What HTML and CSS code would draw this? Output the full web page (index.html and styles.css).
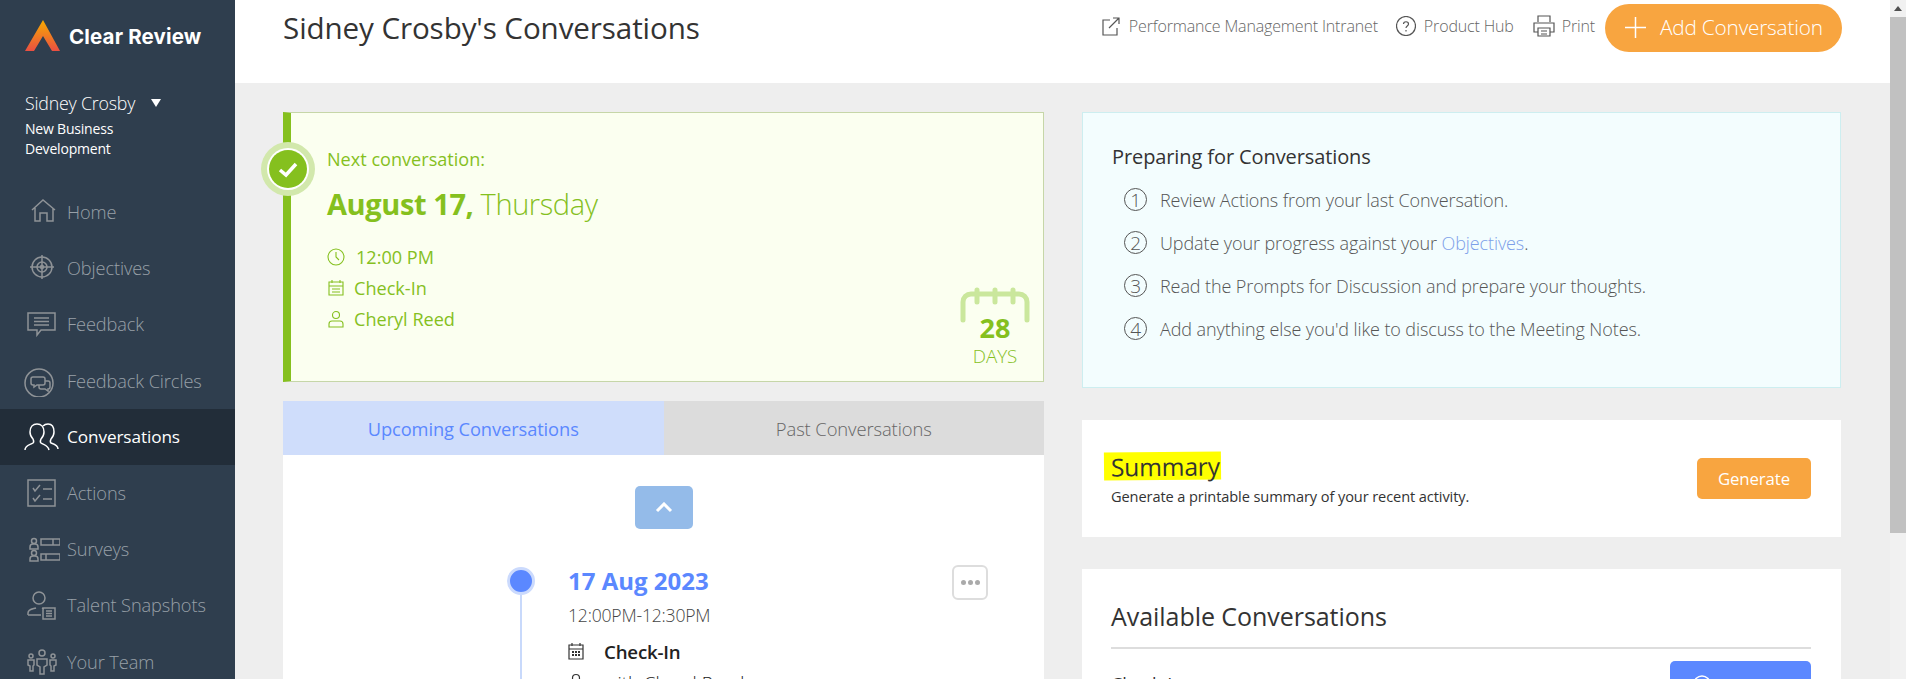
FILE: index.html
```html
<!DOCTYPE html>
<html lang="en">
<head>
<meta charset="utf-8">
<title>Sidney Crosby's Conversations</title>
<link rel="stylesheet" href="styles.css">
</head>
<body>
<div class="app">
  <aside class="sidebar">
    <div class="brand">
      <svg class="brand-mark" width="36" height="32" viewBox="0 0 36 32"><defs><linearGradient id="lg" x1="0" y1="0" x2="0" y2="1"><stop offset="0" stop-color="#f7ab00"/><stop offset="1" stop-color="#ea4f42"/></linearGradient></defs><polygon points="18,0 35,31 27,31 18,16 9,31 0,31" fill="url(#lg)"/></svg>
      <span class="brand-name">Clear Review</span>
    </div>
    <div class="user">
      <div class="user-name">Sidney Crosby <span class="caret"></span></div>
      <div class="user-team">New Business<br>Development</div>
    </div>
    <nav class="nav">
      <a class="nav-item"><svg class="nav-icon" viewBox="0 0 36 32"><path d="M8 14 19 4l12 10M11 12v13h5v-8h7v8h6V12"/></svg>Home</a>
      <a class="nav-item"><svg class="nav-icon" viewBox="0 0 36 32"><circle cx="18" cy="15" r="10"/><circle cx="18" cy="15" r="5"/><circle cx="18" cy="15" r="1.5"/><path d="M18 3v24M6 15h24"/></svg>Objectives</a>
      <a class="nav-item"><svg class="nav-icon" viewBox="0 0 36 32"><path d="M4 5h27v17H17l-4 5v-5H4zM10 10h15M10 13.500h15M10 17h15"/></svg>Feedback</a>
      <a class="nav-item"><svg class="nav-icon" viewBox="0 0 36 32"><circle cx="15" cy="18" r="14"/><path d="M9 12h10a2 2 0 0 1 2 2v4a2 2 0 0 1-2 2h-6l-3 2v-2H9a2 2 0 0 1-2-2v-4a2 2 0 0 1 2-2z"/><path d="M21 16h3a2 2 0 0 1 2 2v4a2 2 0 0 1-2 2v2l-3-2h-4a2 2 0 0 1-2-2v-2"/></svg>Feedback Circles</a>
      <a class="nav-item nav-item-active"><svg class="nav-icon" viewBox="0 0 36 32"><path d="M1 29c0-5 5-5 8-7 1-1 1-2 0-4-2-2-3-4-3-7 0-5 3-8 7-8s7 3 7 8c0 3-1 5-3 7-1 2-1 3 0 4 3 2 7 2 8 7"/><path d="M19 5c1-1 3-2 5-2 4 0 6 3 6 8 0 3-1 5-3 7-1 2-1 3 0 4 3 1 7 2 7 6"/></svg>Conversations</a>
      <a class="nav-item"><svg class="nav-icon" viewBox="0 0 36 32"><path d="M4 3h27v26H4zM9 11l2 3 5-6M9 21l2 3 5-6M19 12h9M19 22h9"/></svg>Actions</a>
      <a class="nav-item"><svg class="nav-icon" viewBox="0 0 36 32"><circle cx="10" cy="8" r="2.500"/><path d="M6 16v-2a3 3 0 0 1 3-3h2a3 3 0 0 1 3 3v2zM17 6h19v6H17zM29 6v6"/><circle cx="10" cy="20" r="2.500"/><path d="M6 28v-2a3 3 0 0 1 3-3h2a3 3 0 0 1 3 3v2zM17 21h19v6H17zM22 21v6"/></svg>Surveys</a>
      <a class="nav-item"><svg class="nav-icon" viewBox="0 0 36 32"><circle cx="15" cy="9" r="6"/><path d="M4 26v-2c0-4 5-4 8-5M18 19l2 1M4 26h13M19 19h12v11H19zM22 22h6M22 24.500h6M22 27h6"/></svg>Talent Snapshots</a>
      <a class="nav-item"><svg class="nav-icon" viewBox="0 0 36 32"><circle cx="18" cy="7" r="3"/><circle cx="7" cy="10" r="2"/><circle cx="29" cy="10" r="2"/><path d="M13 13h10v6l-3 2v7h-4v-7l-3-2zM4 14h6v5l-1 1v5H6v-5l-2-1zM26 14h6v5l-2 1v5h-3v-5l-1-1z"/></svg>Your Team</a>
    </nav>
  </aside>
  <div class="main">
    <header class="topbar">
      <h1 class="page-title">Sidney Crosby's Conversations</h1>
      <div class="top-actions">
        <a class="top-link"><svg class="top-icon" viewBox="0 0 20 20"><path d="M9 4H2v15h14v-7M8 12 18 2M12 2h6v6"/></svg>Performance Management Intranet</a>
        <a class="top-link"><svg class="top-icon" viewBox="0 0 20 20"><circle cx="10" cy="10" r="9.500"/><path d="M7.500 8c0-3 5-3 5 0 0 2-2.500 2-2.500 4M10 14v1.500"/></svg>Product Hub</a>
        <a class="top-link"><svg class="top-icon top-icon-wide" viewBox="0 0 24 24"><path d="M6 8V2h12v6M6 18H2V9h20v9h-4M6 14h12v8H6zM9 17h6M9 20h6"/></svg>Print</a>
        <button class="add-btn"><svg class="add-plus" viewBox="0 0 21 21"><path d="M10.500 0v21M0 10.500h21"/></svg>Add Conversation</button>
      </div>
    </header>
    <div class="content">
      <section class="col">
        <div class="next-card">
          <div class="next-badge"><svg width="38" height="38" viewBox="0 0 38 38"><circle cx="19" cy="19" r="19" fill="#85c01e"/><path d="M11 20l6 5 10-11" fill="none" stroke="#fff" stroke-width="3.500"/></svg></div>
          <div class="next-label">Next conversation:</div>
          <div class="next-date"><strong>August 17,</strong> Thursday</div>
          <div class="next-meta">
            <div class="meta-row"><svg class="meta-icon" viewBox="0 0 18 18"><circle cx="9" cy="9" r="8"/><path d="M9 4v5l3 3"/></svg><span class="meta-time">12:00 PM</span></div>
            <div class="meta-row"><svg class="meta-icon" viewBox="0 0 18 18"><path d="M2 3h14v13H2zM2 7h14M5 1v3M13 1v3M5 10h8M5 13h8" /></svg><span>Check-In</span></div>
            <div class="meta-row"><svg class="meta-icon" viewBox="0 0 18 18"><circle cx="9" cy="5" r="3.500"/><path d="M2 17v-3a3 3 0 0 1 3-3h8a3 3 0 0 1 3 3v3z"/></svg><span>Cheryl Reed</span></div>
          </div>
          <div class="days">
            <svg width="70" height="36" viewBox="0 0 70 36"><path d="M3 33V15a8 8 0 0 1 8-8h48a8 8 0 0 1 8 8v18M17 3v12M35 3v12M53 3v12" fill="none" stroke="#cae79c" stroke-width="5" stroke-linecap="round"/></svg>
            <div class="days-num">28</div>
            <div class="days-label">DAYS</div>
          </div>
        </div>
        <div class="tabs">
          <div class="tab tab-active">Upcoming Conversations</div>
          <div class="tab">Past Conversations</div>
        </div>
        <div class="timeline-panel">
          <div class="up-btn"><svg width="18" height="11" viewBox="0 0 18 11"><path d="M2 9l7-7 7 7" fill="none" stroke="#fff" stroke-width="3"/></svg></div>
          <div class="event">
            <div class="event-rail"><span class="event-dot"></span><span class="event-line"></span></div>
            <div class="event-body">
              <div class="event-date">17 Aug 2023</div>
              <div class="event-time">12:00PM-12:30PM</div>
              <div class="event-row event-type"><svg class="event-icon" viewBox="0 0 16 18"><path d="M1 3h14v14H1zM1 7h14M4 1v3M12 1v3"/><path class="event-grid" d="M4 9h2v2H4zM7 9h2v2H7zM10 9h2v2h-2zM4 12h2v2H4zM7 12h2v2H7zM10 12h2v2h-2z"/></svg>Check-In</div>
              <div class="event-row event-with"><svg class="event-icon" viewBox="0 0 16 18"><circle cx="8" cy="5" r="3.500"/><path d="M1 17v-3a3 3 0 0 1 3-3h8a3 3 0 0 1 3 3v3z"/></svg>with Cheryl Reed</div>
            </div>
            <div class="more-btn"><span></span><span></span><span></span></div>
          </div>
        </div>
      </section>
      <section class="col">
        <div class="prep-card">
          <h2 class="prep-title">Preparing for Conversations</h2>
          <ol class="prep-list">
            <li class="prep-item"><span class="prep-num">1</span><span>Review Actions from your last Conversation.</span></li>
            <li class="prep-item"><span class="prep-num">2</span><span>Update your progress against your <a class="link">Objectives</a>.</span></li>
            <li class="prep-item"><span class="prep-num">3</span><span>Read the Prompts for Discussion and prepare your thoughts.</span></li>
            <li class="prep-item"><span class="prep-num">4</span><span>Add anything else you'd like to discuss to the Meeting Notes.</span></li>
          </ol>
        </div>
        <div class="summary-card">
          <div>
            <h2 class="summary-title"><span class="hl">Summary</span></h2>
            <p class="summary-sub">Generate a printable summary of your recent activity.</p>
          </div>
          <button class="generate-btn">Generate</button>
        </div>
        <div class="avail-card">
          <h2 class="avail-title">Available Conversations</h2>
          <div class="avail-row">
            <span class="avail-name">Check-In</span>
            <button class="schedule-btn"><svg width="18" height="18" viewBox="0 0 18 18"><circle cx="9" cy="9" r="8" fill="none" stroke="#fff" stroke-width="1.500"/></svg>Schedule</button>
          </div>
        </div>
      </section>
    </div>
  </div>
  <div class="scrollbar"><span class="scroll-arrow"></span><span class="scroll-thumb"></span></div>
</div>
</body>
</html>
```
FILE: styles.css
```css
* { box-sizing: border-box; }
html, body { margin: 0; height: 679px; overflow: hidden; }
body { font-family: "Open Sans", "Noto Sans", sans-serif; font-weight: 300; color: #333; background: #eee; }
h1, h2, p, ol { margin: 0; padding: 0; font-weight: 300; }
.app { display: flex; height: 679px; }

.sidebar { width: 235px; flex: none; background: #2f3e4e; color: #fff; overflow: hidden; }
.brand { display: flex; align-items: center; height: 62px; padding: 10px 0 0 25px; }
.brand-mark { margin-right: 8px; }
.brand-name { font-family: "Inter", sans-serif; font-weight: 700; font-size: 20.500px; letter-spacing: .15px; }
.user { height: 122px; padding: 28px 0 0 25px; }
.user-name { font-size: 17.800px; line-height: 26px; font-weight: 300; letter-spacing: -.2px; }
.caret { display: inline-block; width: 0; height: 0; margin: 0 0 3px 11px; border-left: 5px solid transparent; border-right: 5px solid transparent; border-top: 8px solid #fff; }
.user-team { font-size: 14px; line-height: 19.500px; font-weight: 400; letter-spacing: -.2px; margin-top: 3px; }
.nav { display: flex; flex-direction: column; }
.nav-item { display: flex; align-items: center; height: 56.200px; flex: none; padding-left: 24px; font-size: 18.200px; color: #98a0a8; font-weight: 300; letter-spacing: -.1px; }
.nav-icon { width: 36px; height: 32px; margin-right: 7px; fill: none; stroke: #8f9397; stroke-width: 1.500; flex: none; }
.nav-item-active { background: #222d39; color: #fff; font-weight: 400; font-size: 17.200px; }
.nav-item-active .nav-icon { stroke: #fff; }

.main { flex: 1; min-width: 0; display: flex; flex-direction: column; }
.topbar { height: 83px; flex: none; background: #fff; display: flex; justify-content: space-between; align-items: flex-start; padding: 4px 48px 0 48px; }
.page-title { font-size: 29.600px; line-height: 40px; margin-top: 4px; font-weight: 400; color: #333; letter-spacing: -.1px; }
.top-actions { display: flex; align-items: center; height: 48px; }
.top-link { display: flex; align-items: center; font-size: 16px; color: #666; letter-spacing: -.15px; margin-right: 18px; margin-top: -4px; }
.top-icon { width: 20px; height: 20px; margin-right: 8px; fill: none; stroke: #555; stroke-width: 1.200; }
.top-icon-wide { width: 24px; height: 24px; margin-right: 6px; }
.add-btn { display: flex; align-items: center; width: 237px; height: 48px; margin-left: -8px; padding: 0 0 2px 20px; border: 0; border-radius: 24px; background: #f8a540; color: #fff; font: 300 20.800px "Open Sans", sans-serif; letter-spacing: -.2px; }
.add-plus { width: 21px; height: 21px; margin-right: 14px; fill: none; stroke: #fff; stroke-width: 1.500; }

.content { flex: 1; display: grid; grid-template-columns: 761px 759px; column-gap: 38px; padding: 29px 0 0 48px; overflow: hidden; }
.col { display: flex; flex-direction: column; min-width: 0; }

.next-card { position: relative; height: 270px; flex: none; padding: 34px 0 0 36px; background: #fbfff0; border: 1px solid #c6d6a8; border-left: 8px solid #85c01e; color: #85c01e; font-weight: 400; }
.next-badge { position: absolute; left: -24px; top: 35px; width: 42px; height: 42px; display: flex; align-items: center; justify-content: center; border-radius: 50%; background: #fff; box-shadow: 0 0 0 6px #d2e8ac; }
.next-label { font-size: 18.100px; line-height: 24px; }
.next-date { font-size: 29px; line-height: 40px; margin-top: 13px; font-weight: 300; letter-spacing: -.4px; }
.next-date strong { font-weight: 700; }
.next-meta { margin-top: 17px; font-size: 18.100px; }
.meta-row { display: flex; align-items: center; height: 31px; }
.meta-icon { width: 18px; height: 18px; margin-right: 9px; fill: none; stroke: #85c01e; stroke-width: 1.100; }
.meta-time { margin-left: 2px; }
.days { position: absolute; right: 13px; bottom: 14px; width: 70px; display: flex; flex-direction: column; align-items: center; }
.days-num { font-size: 27px; line-height: 26px; font-weight: 700; margin-top: -8px; }
.days-label { font-size: 18.800px; line-height: 22px; font-weight: 300; margin-top: 4px; }

.tabs { display: flex; height: 54px; flex: none; margin-top: 19px; }
.tab { flex: 1; display: flex; align-items: center; justify-content: center; background: #dcdcdc; color: #666; font-size: 18.400px; font-weight: 300; letter-spacing: -.1px; }
.tab-active { background: #cfddfb; color: #5b88ff; font-weight: 400; font-size: 18.300px; }
.timeline-panel { flex: 1; background: #fff; padding-top: 31px; overflow: hidden; }
.up-btn { width: 58px; height: 43px; margin: 0 0 0 352px; display: flex; align-items: center; justify-content: center; border-radius: 5px; background: #94bbe9; }
.event { display: flex; margin: 36px 0 0 0; padding-left: 224px; }
.event-rail { position: relative; width: 28px; margin-right: 33px; height: 200px; flex: none; }
.event-dot { position: absolute; left: 0; top: 2px; width: 28px; height: 28px; border-radius: 50%; background: #5b88ff; border: 3px solid #cbdafd; }
.event-line { position: absolute; left: 13px; top: 30px; bottom: 0; width: 2px; background: #c8d9fb; }
.event-body { flex: none; width: 370px; }
.event-date { font-size: 24px; line-height: 32px; font-weight: 700; color: #5b88ff; }
.event-time { font-size: 17.600px; line-height: 24px; margin-top: 6px; color: #444; letter-spacing: -.2px; }
.event-row { display: flex; align-items: center; height: 28px; font-size: 18.700px; color: #222; }
.event-type { margin-top: 10px; font-weight: 600; letter-spacing: -.2px; }
.event-with { font-weight: 300; margin-top: 3px; }
.event-icon { width: 16px; height: 18px; margin-right: 20px; fill: none; stroke: #333; stroke-width: 1.200; }
.event-grid { fill: #333; stroke: none; }
.more-btn { width: 36px; height: 35px; flex: none; margin: 0 0 0 14px; display: flex; align-items: center; justify-content: center; gap: 2px; border: 2px solid #ddd; border-radius: 6px; }
.more-btn span { width: 5px; height: 5px; border-radius: 50%; background: #aaa; }

.prep-card { height: 276px; flex: none; padding: 29px 0 0 29px; background: #f3fdfe; border: 1px solid #cdeef0; }
.prep-title { font-size: 20px; line-height: 30px; font-weight: 400; color: #333; letter-spacing: -.1px; }
.prep-list { list-style: none; margin-top: 6px; }
.prep-item { display: flex; align-items: center; height: 43px; padding-left: 12px; font-size: 18px; color: #555; letter-spacing: -.1px; }
.prep-num { width: 23px; height: 23px; margin-right: 13px; display: flex; align-items: center; justify-content: center; flex: none; border: 1px solid #555; border-radius: 50%; font-size: 19px; }
.link { color: #7d9fe9; }

.summary-card { height: 117px; flex: none; margin-top: 32px; padding: 0 30px 0 29px; display: flex; align-items: center; justify-content: space-between; background: #fff; }
.summary-title { font-size: 24.600px; line-height: 28px; font-weight: 400; color: #333; letter-spacing: -.2px; }
.hl { display: inline-block; background: #ff0; margin-left: -7px; padding: 0 1px 0 7px; height: 28px; line-height: 30px; transform: rotate(-.5deg); }
.summary-sub { font-size: 14.600px; line-height: 20px; font-weight: 400; color: #333; margin-top: 5px; letter-spacing: -.1px; }
.generate-btn { width: 114px; height: 41px; border: 0; border-radius: 5px; background: #f8a540; color: #fff; font: 400 16.800px "Open Sans", sans-serif; letter-spacing: -.1px; }

.avail-card { flex: 1; margin-top: 32px; padding: 29px 30px 0 29px; background: #fff; }
.avail-title { height: 51px; font-size: 25px; line-height: 36px; font-weight: 400; color: #333; border-bottom: 2px solid #ddd; letter-spacing: -.05px; }
.avail-row { display: flex; justify-content: space-between; padding-top: 12px; }
.avail-name { font-size: 18px; line-height: 36px; padding-top: 5px; font-weight: 400; }
.schedule-btn { display: flex; align-items: flex-start; justify-content: center; gap: 8px; width: 141px; height: 50px; padding-top: 14px; border: 0; border-radius: 5px; background: #5b88ff; color: #fff; font: 400 16.500px "Open Sans", sans-serif; }

.scrollbar { width: 16px; flex: none; background: #f1f1f1; display: flex; flex-direction: column; align-items: center; }
.scroll-arrow { width: 0; height: 0; margin: 6px 0 6px; border-left: 4px solid transparent; border-right: 4px solid transparent; border-bottom: 5px solid #505050; }
.scroll-thumb { width: 100%; height: 516px; background: #c1c1c1; }
```
